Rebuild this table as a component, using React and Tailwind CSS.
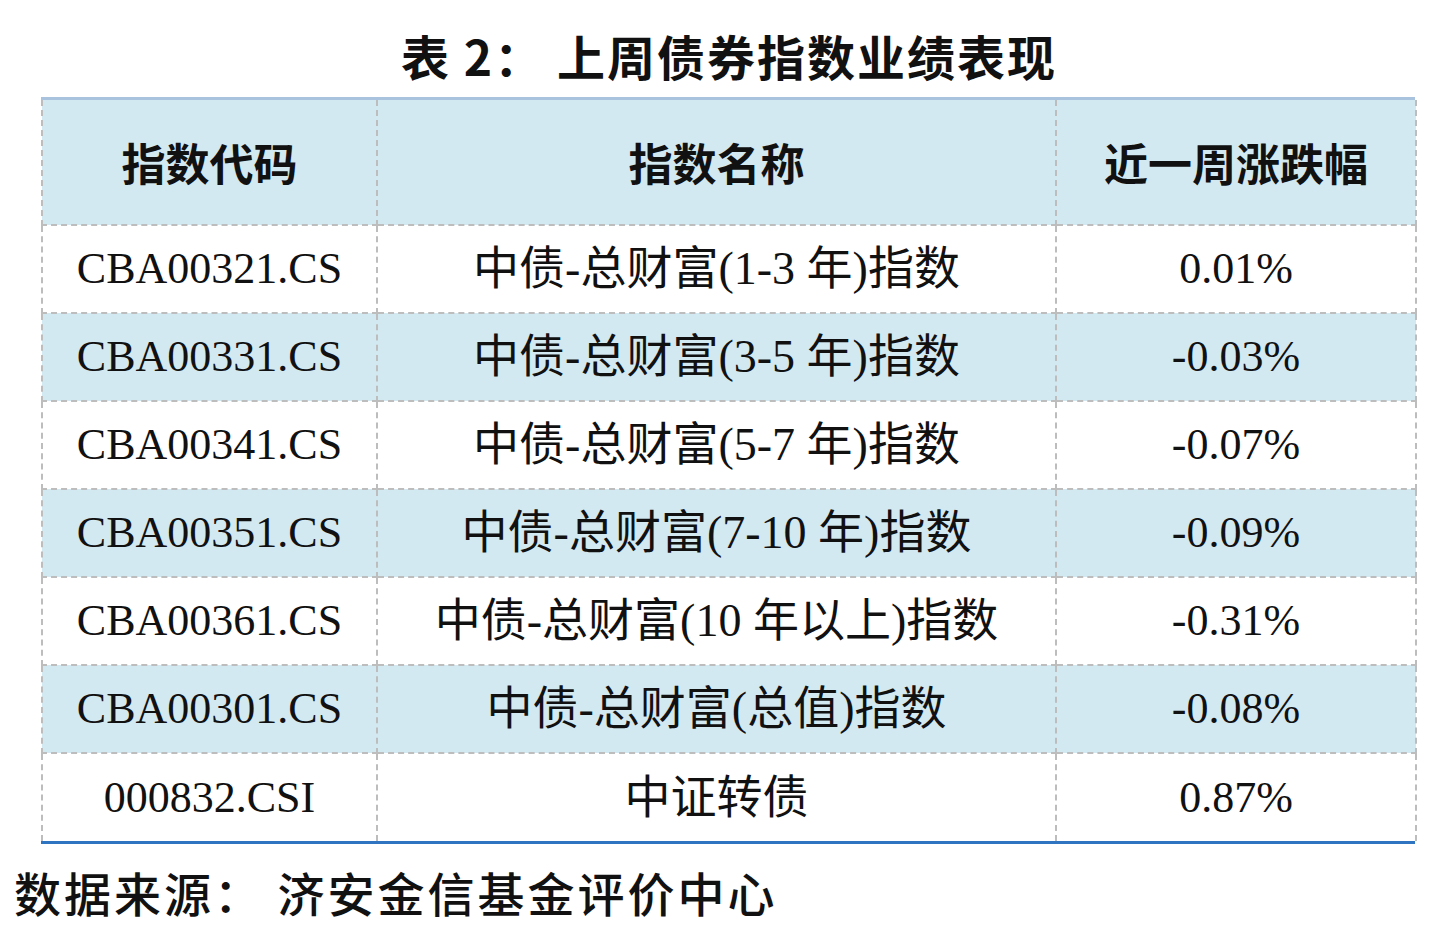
const rows = [
  ['CBA00321.CS', '中债-总财富(1-3 年)指数', '0.01%'],
  ['CBA00331.CS', '中债-总财富(3-5 年)指数', '-0.03%'],
  ['CBA00341.CS', '中债-总财富(5-7 年)指数', '-0.07%'],
  ['CBA00351.CS', '中债-总财富(7-10 年)指数', '-0.09%'],
  ['CBA00361.CS', '中债-总财富(10 年以上)指数', '-0.31%'],
  ['CBA00301.CS', '中债-总财富(总值)指数', '-0.08%'],
  ['000832.CSI', '中证转债', '0.87%'],
];

const serif = { fontFamily: '"Liberation Serif", "Noto Sans CJK SC", serif' };
const cjk = { fontFamily: '"Noto Sans CJK SC", sans-serif' };

export default function App() {
  return (
    <div className="w-[1440px] h-[935px] bg-white text-[#111]" style={serif}>
      <div className="h-[97px] flex items-center justify-center pt-[12px] pl-[18px]">
        <h1 className="text-[48px] font-bold leading-none tracking-[2px]" style={cjk}>
          表 2： 上周债券指数业绩表现
        </h1>
      </div>

      <div className="ml-[41px] w-[1374px] border-t-[3px] border-b-[3px] border-t-[#a9c2de] border-b-[#2f74c0]">
        <table className="w-full border-collapse table-fixed">
          <colgroup>
            <col className="w-[335px]" />
            <col className="w-[679px]" />
            <col className="w-[360px]" />
          </colgroup>
          <thead>
            <tr className="h-[125px] bg-[#d3e9f2]">
              {['指数代码', '指数名称', '近一周涨跌幅'].map((h) => (
                <th
                  key={h}
                  className="border-dashed border-[#bdbdbd] border-2 border-t-0 text-center text-[44px] font-bold"
                  style={cjk}
                >
                  {h}
                </th>
              ))}
            </tr>
          </thead>
          <tbody>
            {rows.map((r, idx) => (
              <tr key={r[0]} className={`h-[88px] ${idx % 2 === 1 ? 'bg-[#d3e9f2]' : 'bg-white'}`}>
                {r.map((c, i) => (
                  <td
                    key={i}
                    className={`border-dashed border-[#bdbdbd] border-2 text-center leading-none ${i === 1 ? 'text-[46px]' : 'text-[44px]'} ${idx === rows.length - 1 ? 'border-b-0' : ''}`}
                  >
                    {c}
                  </td>
                ))}
              </tr>
            ))}
          </tbody>
        </table>
      </div>

      <div className="pl-[14px] pt-[24px] text-[47px] font-medium leading-none tracking-[3px]" style={cjk}>
        数据来源： 济安金信基金评价中心
      </div>
    </div>
  );
}
